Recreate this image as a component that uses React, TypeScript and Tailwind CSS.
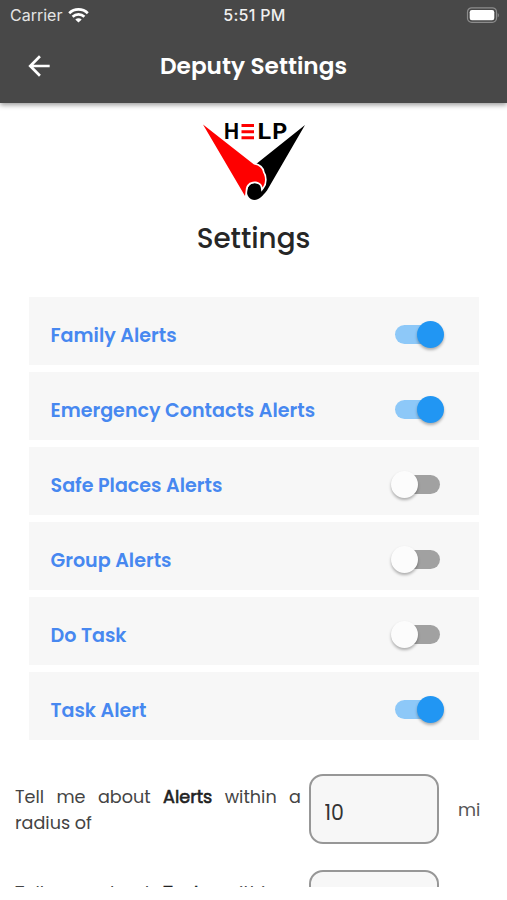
import { useState } from "react"
import { MdArrowBack } from "react-icons/md"

const initialAlerts = [
    { label: "Family Alerts", enabled: true },
    { label: "Emergency Contacts Alerts", enabled: true },
    { label: "Safe Places Alerts", enabled: false },
    { label: "Group Alerts", enabled: false },
    { label: "Do Task", enabled: false },
    { label: "Task Alert", enabled: true },
]

function StatusBar() {
    return (
        <div className="grid h-[30px] grid-cols-3 items-center pl-[10px] pr-[8px] font-[Inter,sans-serif] text-white">
            <div className="flex items-center gap-[6px] text-[16px] text-[#e4e4e4]">
                <span className="w-[52px]">Carrier</span>
                <svg width="21" height="15" viewBox="0 0 21 15" fill="none" stroke="white" strokeWidth="2.7">
                    <path d="M1.2 5.2C6.4 0.1 14.6 0.1 19.8 5.2" />
                    <path d="M4.6 8.7C7.9 5.5 13.1 5.5 16.4 8.7" />
                    <path d="M10.5 14.6L7.3 11.5C9.1 9.8 11.9 9.8 13.7 11.5Z" fill="white" stroke="none" />
                </svg>
            </div>
            <span className="text-center text-[16px] font-medium tracking-[0.3px] text-[#f0f0f0]">5:51 PM</span>
            <svg className="-mt-px justify-self-end" width="33" height="16" viewBox="0 0 33 16">
                <rect x="1.5" y="0.8" width="29" height="14.6" rx="4.2" fill="none" stroke="#8c8c8c" strokeWidth="1.2" />
                <rect x="3.7" y="3" width="24.6" height="10.2" rx="2.2" fill="white" />
                <path d="M31.7 6V10.4C33.2 9.6 33.2 6.8 31.7 6Z" fill="#8c8c8c" />
            </svg>
        </div>
    )
}

function Logo() {
    return (
        <svg width="104" height="78" viewBox="0 0 104 78" className="mx-auto block overflow-visible">
            <path
                d="M103 2L65 67.5C60 73.5 57 77 52.5 77C48 77 45 73 45 69C45 64 48.5 60 53 60L60 62L53.5 41.5Z"
                fill="#000"
            />
            <path
                d="M1 1.5L52 41.5C57.5 42.5 60.5 45.5 61 49.5C63.5 53 64 60 60.5 64.5C60 61 57 58.5 52.5 58.5C47.5 58.5 44 62 43.7 67L43 73Z"
                fill="#fe0000"
                stroke="#fff"
                strokeWidth="3.4"
                paintOrder="stroke"
            />
            <g fontFamily="Inter, sans-serif" fontSize="21" fontWeight="700">
                <text x="21.9" y="16.3" textLength="15" lengthAdjust="spacingAndGlyphs">H</text>
                <text x="55.4" y="16.3" textLength="14" lengthAdjust="spacingAndGlyphs">L</text>
                <text x="70.3" y="16.3" textLength="15" lengthAdjust="spacingAndGlyphs">P</text>
            </g>
            <path d="M39.5 2.6H52M39.5 8.7H52M39.5 14.8H52" stroke="#fe0000" strokeWidth="3" />
        </svg>
    )
}

function Toggle({ checked, onChange }: { checked: boolean; onChange: () => void }) {
    return (
        <button
            type="button"
            role="switch"
            aria-checked={checked}
            onClick={onChange}
            className={`relative h-[19px] w-[45px] rounded-full ${checked ? "bg-[#8dc8f8]" : "bg-[#a1a1a1]"}`}
        >
            <span
                className={`absolute -top-[4px] size-[27px] rounded-full shadow-[0_2px_3px_rgba(0,0,0,0.3)] ${
                    checked ? "-right-[4px] bg-[#2196f3]" : "-left-[4px] bg-[#fcfcfc]"
                }`}
            />
        </button>
    )
}

function RadiusField({ subject, value }: { subject: string; value: string }) {
    const [radius, setRadius] = useState(value)

    return (
        <div className="flex h-[96px] items-start pl-[15px]">
            <p className="mt-[9.5px] w-[286px] text-justify text-[17.6px] leading-[26.5px] text-[#444]">
                Tell me about{" "}
                <span className="text-[#222] [-webkit-text-stroke:0.6px_#222]">{subject}</span> within a radius of
            </p>
            <input
                type="text"
                value={radius}
                onChange={(e) => setRadius(e.target.value)}
                className="ml-[7.5px] h-[70px] w-[130px] rounded-[14px] border-2 border-[#979797] bg-[#f7f7f7] px-[14px] pt-[7px] text-[20.5px] text-[#333] outline-none"
            />
            <span className="ml-[19.5px] mt-[23px] text-[17.5px] leading-[26px] text-[#555]">mi</span>
        </div>
    )
}

export default function App() {
    const [alerts, setAlerts] = useState(initialAlerts)

    const toggle = (index: number) => {
        setAlerts(alerts.map((a, i) => (i === index ? { ...a, enabled: !a.enabled } : a)))
    }

    return (
        <div className="h-[900px] w-full overflow-hidden bg-white font-[Poppins,Inter,sans-serif]">
            <div className="flex h-[887px] flex-col overflow-hidden">
                <header className="h-[103px] shrink-0 bg-[#484848] shadow-[0_2px_5px_rgba(0,0,0,0.4)]">
                    <StatusBar />
                    <div className="grid h-[71px] grid-cols-[80px_1fr_80px] items-center text-white">
                        <button type="button" aria-label="Back" className="pl-[23px]">
                            <MdArrowBack size={32} />
                        </button>
                        <h1 className="pt-[2px] text-center text-[23.2px] font-semibold">Deputy Settings</h1>
                    </div>
                </header>

                <div className="mt-[20px] shrink-0">
                    <Logo />
                    <h2 className="mt-[18px] text-center text-[27.8px] font-medium leading-[40px] text-[#262626]">
                        Settings
                    </h2>
                </div>

                <div className="ml-[29px] mr-[28px] mt-[37.5px] flex shrink-0 flex-col gap-[6.6px]">
                    {alerts.map((alert, index) => (
                        <div
                            key={alert.label}
                            className="flex h-[68.5px] items-center justify-between bg-[#f7f7f7] pl-[21.5px] pr-[39px] pt-[7.5px]"
                        >
                            <span className="pt-[3.2px] text-[19.1px] font-semibold text-[#4788f0]">
                                {alert.label}
                            </span>
                            <Toggle checked={alert.enabled} onChange={() => toggle(index)} />
                        </div>
                    ))}
                </div>

                <div className="mt-[34px] shrink-0">
                    <RadiusField subject="Alerts" value="10" />
                    <RadiusField subject="Tasks" value="10" />
                </div>
            </div>
        </div>
    )
}
